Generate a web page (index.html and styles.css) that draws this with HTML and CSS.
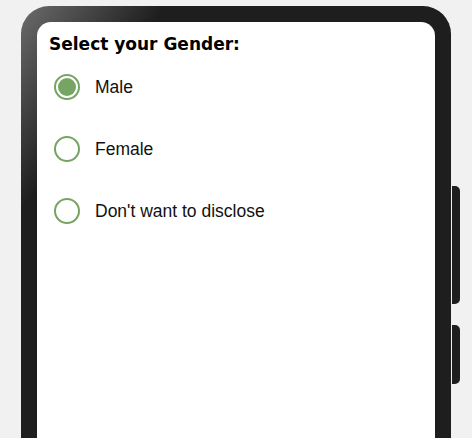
FILE: index.html
```html
<!DOCTYPE html>
<html>
<head>
<meta charset="utf-8">
<link rel="stylesheet" href="styles.css">
</head>
<body>
<div class="phone">
  <span class="side-btn btn-1"></span>
  <span class="side-btn btn-2"></span>
  <div class="screen">
    <h1 class="title">Select your Gender:</h1>
    <div class="options">
      <label class="option">
        <span class="radio checked"><span class="dot"></span></span>
        <span class="label">Male</span>
      </label>
      <label class="option">
        <span class="radio"></span>
        <span class="label">Female</span>
      </label>
      <label class="option">
        <span class="radio"></span>
        <span class="label">Don't want to disclose</span>
      </label>
    </div>
  </div>
</div>
</body>
</html>
```
FILE: styles.css
```css
html, body {
  margin: 0;
  padding: 0;
  background: #f1f1f1;
  overflow: hidden;
}
body {
  padding: 6px 0 0 21px;
  font-family: "Liberation Sans", Arial, sans-serif;
}
.phone {
  position: relative;
  width: 398px;
  height: 416px;
  padding: 16px 16px 0 16px;
  border-radius: 28px 28px 0 0;
  background: linear-gradient(125deg, #6c6c6c 0px, #1e1e1e 118px);
}
.side-btn {
  position: absolute;
  left: 431px;
  width: 8px;
  background: #1e1e1e;
  border-radius: 0 5px 5px 0;
}
.btn-1 { top: 180px; height: 118px; }
.btn-2 { top: 319px; height: 59px; }
.screen {
  background: #fff;
  height: 100%;
  border-radius: 14px 14px 0 0;
  padding: 12px 12px 0 12px;
  box-sizing: border-box;
}
.title {
  margin: 0;
  font-family: "DejaVu Sans", sans-serif;
  font-weight: bold;
  font-size: 17px;
  line-height: 20px;
  color: #000;
}
.options {
  display: flex;
  flex-direction: column;
  gap: 36px;
  margin-top: 20px;
  padding-left: 5px;
}
.option {
  display: flex;
  align-items: center;
  gap: 15px;
  height: 26px;
}
.radio {
  width: 26px;
  height: 26px;
  box-sizing: border-box;
  border: 2px solid #76a462;
  border-radius: 50%;
  display: flex;
  align-items: center;
  justify-content: center;
}
.dot {
  width: 18px;
  height: 18px;
  border-radius: 50%;
  background: #76a462;
}
.label {
  font-size: 17.5px;
  color: #111;
}
```
